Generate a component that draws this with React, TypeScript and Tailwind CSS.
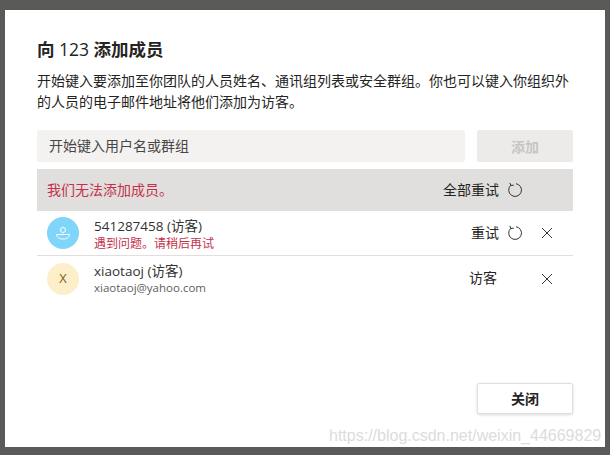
import React from 'react';

const FONT = "font-['Segoe_UI','Open_Sans','Noto_Sans_CJK_SC',sans-serif]";

// ── Retry icon ──
const RetryIcon = () => (
  <svg width="16" height="16" viewBox="0 0 16 16" fill="none" stroke="#333" strokeWidth="1" className="shrink-0">
    <path d="M9 1.7A6.4 6.4 0 1 1 3.9 3.2" />
    <path d="M2.8 0.9 L3.9 3.4 L6.8 3.2" />
  </svg>
);

const CloseIcon = () => (
  <svg width="12" height="12" viewBox="0 0 12 12" fill="none" stroke="#333" strokeWidth="1" className="shrink-0">
    <path d="M1 1 L11 11 M11 1 L1 11" />
  </svg>
);

const MemberRow = ({
  avatar,
  avatarClass,
  name,
  sub,
  subClass,
  action,
  border,
}: {
  avatar: React.ReactNode;
  avatarClass: string;
  name: string;
  sub: string;
  subClass: string;
  action: React.ReactNode;
  border?: boolean;
}) => (
  <div className={`flex items-center h-[45px] pl-[10px] ${border ? 'border-b border-[#e1dfdd]' : ''}`}>
    <div className={`w-[32px] h-[32px] rounded-full flex items-center justify-center shrink-0 ${avatarClass}`}>{avatar}</div>
    <div className="ml-[15px] flex-1 min-w-0 pt-[2px]">
      <div className="text-[13.5px] leading-[16px] text-[#333]">{name}</div>
      <div className={`leading-[14px] ${subClass}`}>{sub}</div>
    </div>
    {action}
  </div>
);

export default function App() {
  return (
    <div className={`w-[610px] h-[455px] bg-[#5a5a58] pt-[10px] pl-[5px] overflow-hidden relative ${FONT}`}>
      <div className="w-[600px] h-[437px] bg-white pt-[28px] px-[32px] flex flex-col">
        <h1 className="text-[17.5px] leading-[22px] font-bold text-[#252423]">
          向 <span className="font-normal">123</span> 添加成员
        </h1>
        <p className="mt-[10px] text-[14px] leading-[21px] text-[#252423] w-[536px]">
          开始键入要添加至你团队的人员姓名、通讯组列表或安全群组。你也可以键入你组织外的人员的电子邮件地址将他们添加为访客。
        </p>

        {/* Search row */}
        <div className="mt-[18px] flex gap-[12px]">
          <div className="w-[428px] h-[32px] bg-[#f3f2f1] rounded-[2px] px-[12px] pb-[2px] flex items-center text-[14px] text-[#484644]">
            开始键入用户名或群组
          </div>
          <div className="w-[96px] h-[32px] bg-[#edebe9] rounded-[2px] flex items-center justify-center text-[14px] font-bold text-[#c8c6c4]">
            添加
          </div>
        </div>

        {/* Error banner */}
        <div className="mt-[7px] h-[42px] bg-[#e1dfdd] flex items-center pl-[10px]">
          <span className="flex-1 pb-[2px] text-[14px] text-[#c4314b]">我们无法添加成员。</span>
          <span className="pb-[2px] text-[14px] text-[#252423]">全部重试</span>
          <span className="ml-[8px] mr-[50px]"><RetryIcon /></span>
        </div>

        <MemberRow
          border
          avatarClass="bg-[#80d5fb]"
          avatar={
            <svg width="16" height="16" viewBox="0 0 16 16" fill="none" stroke="#fff" strokeWidth="1">
              <circle cx="8" cy="5" r="2.5" />
              <path d="M1.5 9.5 H14.5 C14.5 12 12 14 8 14 C4 14 1.5 12 1.5 9.5 Z" />
            </svg>
          }
          name="541287458 (访客)"
          sub="遇到问题。请稍后再试"
          subClass="text-[12px] text-[#c4314b] mt-[3px]"
          action={
            <div className="flex items-center">
              <span className="pb-[2px] text-[14px] text-[#252423]">重试</span>
              <span className="ml-[8px]"><RetryIcon /></span>
              <span className="ml-[18px] mr-[20px]"><CloseIcon /></span>
            </div>
          }
        />
        <MemberRow
          avatarClass="bg-[#fdefc9] text-[#7f6020] text-[13px]"
          avatar="X"
          name="xiaotaoj (访客)"
          sub="xiaotaoj@yahoo.com"
          subClass="text-[11.5px] text-[#605e5c] mt-[2px] mb-[2px]"
          action={
            <div className="flex items-center">
              <span className="pb-[2px] text-[14px] text-[#252423]">访客</span>
              <span className="ml-[44px] mr-[20px]"><CloseIcon /></span>
            </div>
          }
        />

        {/* Footer */}
        <div className="mt-auto mb-[33px] flex justify-end">
          <div className="w-[96px] h-[31px] bg-white border border-[#e1dfdd] rounded-[2px] shadow-[0_1px_3px_rgba(0,0,0,0.15)] flex items-center justify-center text-[14px] font-bold text-[#252423]">
            关闭
          </div>
        </div>
      </div>

      {/* CSDN watermark */}
      <div className="absolute left-[329px] top-[427px] text-[16px] leading-[18px] text-[#dcdcdc] font-['Liberation_Sans',sans-serif]">
        https://blog.csdn.net/weixin_44669829
      </div>
    </div>
  );
}
